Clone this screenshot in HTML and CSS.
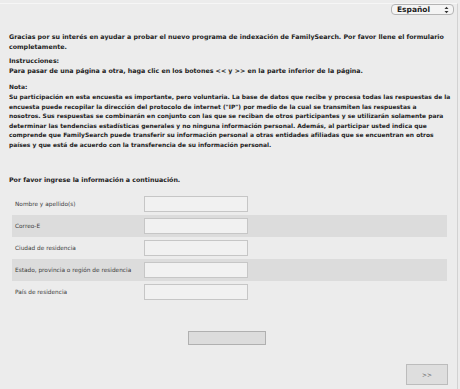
FILE: index.html
```html
<!DOCTYPE html>
<html lang="es">

<head>
    <meta charset="UTF-8">
    <meta name="viewport" content="width=device-width, initial-scale=1.0">
    <title>Encuesta FamilySearch</title>
    <link rel="stylesheet" href="styles.css">
</head>

<body>
    <div class="page">
        <div class="top-bar">
            <div class="lang-select">
                <span>Español</span>
                <svg width="5" height="8" viewBox="0 0 5 8">
                    <path d="M0.5 3 L2.5 0.8 L4.5 3 Z M0.5 5 L2.5 7.2 L4.5 5 Z" fill="#333"/>
                </svg>
            </div>
        </div>

        <div class="intro">
            <p class="intro-text">Gracias por su interés en ayudar a probar el nuevo programa de indexación de FamilySearch. Por favor llene el formulario completamente.</p>
            <p class="intro-text instructions">Instrucciones:<br>Para pasar de una página a otra, haga clic en los botones &lt;&lt; y &gt;&gt; en la parte inferior de la página.</p>
            <p class="intro-text note">Nota:<br>Su participación en esta encuesta es importante, pero voluntaria. La base de datos que recibe y procesa todas las respuestas de la<br>
                encuesta puede recopilar la dirección del protocolo de internet ("IP") por medio de la cual se transmiten las respuestas a<br>
                nosotros. Sus respuestas se combinarán en conjunto con las que se reciban de otros participantes y se utilizarán solamente para<br>
                determinar las tendencias estadísticas generales y no ninguna información personal. Además, al participar usted indica que<br>
                comprende que FamilySearch puede transferir su información personal a otras entidades afiliadas que se encuentran en otros<br>
                países y que está de acuerdo con la transferencia de su información personal.</p>
        </div>

        <p class="form-title">Por favor ingrese la información a continuación.</p>

        <form class="survey-form">
            <div class="form-row">
                <label for="name">Nombre y apellido(s)</label>
                <input type="text" id="name" name="name">
            </div>
            <div class="form-row shaded">
                <label for="email">Correo-E</label>
                <input type="text" id="email" name="email">
            </div>
            <div class="form-row">
                <label for="city">Ciudad de residencia</label>
                <input type="text" id="city" name="city">
            </div>
            <div class="form-row shaded">
                <label for="state">Estado, provincia o región de residencia</label>
                <input type="text" id="state" name="state">
            </div>
            <div class="form-row">
                <label for="country">País de residencia</label>
                <input type="text" id="country" name="country">
            </div>

            <div class="progress-row">
                <div class="progress-bar"></div>
            </div>

            <div class="nav-row">
                <button type="submit" class="next-btn">&gt;&gt;</button>
            </div>
        </form>
    </div>
</body>

</html>
```

FILE: styles.css
```css
body {
    margin: 0;
    background-color: #ececec;
    font-family: "DejaVu Sans", Verdana, sans-serif;
    color: #222;
}

.page {
    width: 458px;
    height: 389px;
    box-sizing: border-box;
    border-right: 1px solid #d2d2d2;
    border-top: 1px solid #f6f6f6;
    margin-top: 3px;
    padding: 0 0 0 9px;
    overflow: hidden;
}

.top-bar {
    display: flex;
    justify-content: flex-end;
    padding-right: 3px;
    margin-top: -3px;
}

.lang-select {
    display: flex;
    align-items: center;
    justify-content: space-between;
    width: 63px;
    height: 11px;
    box-sizing: border-box;
    padding: 0 4px 0 5px;
    border: 1px solid #b4b4b4;
    border-radius: 4px;
    background-color: #f4f4f4;
    font-size: 7.5px;
    font-weight: bold;
    margin-top: 3px;
}

.intro {
    margin-top: 17px;
}

.intro-text {
    margin: 0;
    font-size: 6.3px;
    line-height: 9.6px;
    font-weight: bold;
    padding-right: 6px;
}

.instructions {
    margin-top: 5px;
}

.note {
    margin-top: 7px;
    font-size: 5.95px;
    padding-right: 0;
    white-space: nowrap;
}

.form-title {
    margin: 25px 0 0;
    font-size: 6.3px;
    line-height: 10px;
    font-weight: bold;
}

.survey-form {
    margin-top: 8px;
}

.form-row {
    display: flex;
    align-items: center;
    width: 435px;
    height: 22px;
    margin-left: 3px;
    box-sizing: border-box;
    padding-left: 3px;
}

.form-row.shaded {
    background-color: #dcdcdc;
}

.form-row label {
    width: 129px;
    font-size: 5.8px;
    color: #3c3c3c;
}

.form-row input {
    width: 104px;
    height: 16px;
    box-sizing: border-box;
    border: 1px solid #c6c6c6;
    background-color: #f1f1f1;
    padding: 0;
}

.progress-row {
    display: flex;
    justify-content: center;
    padding-right: 12px;
    margin-top: 28px;
}

.progress-bar {
    width: 78px;
    height: 14px;
    box-sizing: border-box;
    border: 1px solid #b0b0b0;
    background-color: #dcdcdc;
}

.nav-row {
    display: flex;
    justify-content: flex-end;
    padding-right: 9px;
    margin-top: 19px;
}

.next-btn {
    width: 42px;
    height: 21px;
    border: 1px solid #bcbcbc;
    background-color: #dedede;
    font-family: "DejaVu Sans", Verdana, sans-serif;
    font-size: 6px;
    color: #555;
    padding: 0;
    margin-right: 0;
}
```
